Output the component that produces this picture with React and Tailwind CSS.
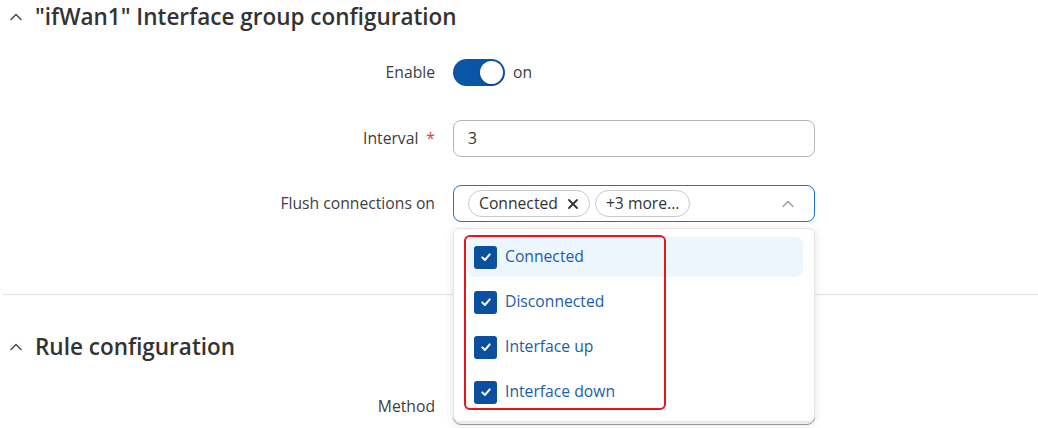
import React from 'react';

function ChevronUp({ className }) {
    return (
        <svg className={className} viewBox="0 0 16 16" fill="none" stroke="currentColor" strokeWidth="1.4" strokeLinecap="round" strokeLinejoin="round">
            <path d="M3 10.5 L8 5.5 L13 10.5" />
        </svg>
    );
}

function Check() {
    return (
        <svg className="w-[12px] h-[12px]" viewBox="0 0 16 16" fill="none" stroke="white" strokeWidth="2.6" strokeLinecap="round" strokeLinejoin="round">
            <path d="M3 8.5 L6.5 12 L13 4.5" />
        </svg>
    );
}

function FormRow({ label, required, children }) {
    return (
        <div className="flex items-center h-[37px]">
            <div className="w-[435px] text-right text-[15.7px] text-[#404040] shrink-0">
                {label}
                {required && <span className="text-[#e0413a] ml-[8px]">*</span>}
            </div>
            <div className="ml-[18px] flex items-center">{children}</div>
        </div>
    );
}

function Heading({ title }) {
    return (
        <div className="flex items-center h-[34px]">
            <ChevronUp className="w-[16px] h-[16px] ml-[8px] text-[#444]" />
            <h2 className="ml-[11px] text-[22.5px] font-semibold text-[#333] leading-none">{title}</h2>
        </div>
    );
}

const options = ['Connected', 'Disconnected', 'Interface up', 'Interface down'];

export default function App() {
    return (
        <div className="relative w-[1038px] h-[428px] overflow-hidden bg-white" style={{ fontFamily: '"Open Sans", sans-serif' }}>
            <Heading title={'"ifWan1" Interface group configuration'} />

            <div className="mt-[20px]">
                <FormRow label="Enable">
                    <div className="w-[52px] h-[27px] rounded-full bg-[#0a55a5] flex items-center justify-end pr-[2px]">
                        <div className="w-[23px] h-[23px] rounded-full bg-white shadow-[0_1px_2px_rgba(0,0,0,0.3)]"></div>
                    </div>
                    <span className="ml-[8px] text-[15.7px] text-[#404040]">on</span>
                </FormRow>
            </div>
            <div className="mt-[29px]">
                <FormRow label="Interval" required>
                    <div className="w-[362px] h-[37px] border border-[#b5b5b5] rounded-[8px] flex items-center px-[14px] text-[15.7px] text-[#333]">3</div>
                </FormRow>
            </div>
            <div className="mt-[28px]">
                <FormRow label="Flush connections on">
                    <div className="w-[362px] h-[37px] border border-[#1a73d9] rounded-[8px] flex items-center pl-[14px] pr-[18px]">
                        <div className="h-[27px] px-[10px] rounded-full border border-[#c8c8c8] flex items-center text-[15.7px] text-[#333]">
                            Connected
                            <svg className="w-[12px] h-[12px] ml-[9px]" viewBox="0 0 12 12" stroke="#333" strokeWidth="1.8" strokeLinecap="round">
                                <path d="M2 2 L10 10 M10 2 L2 10" />
                            </svg>
                        </div>
                        <div className="ml-[5px] h-[27px] px-[10px] rounded-full border border-[#c8c8c8] flex items-center text-[15.7px] text-[#333]">
                            +3 more...
                        </div>
                        <ChevronUp className="ml-auto w-[16px] h-[16px] text-[#9a9a9a]" />
                    </div>
                </FormRow>
            </div>

            <div className="mt-[72px] ml-[3px] border-t border-[#e3e3e3]"></div>

            <div className="mt-[35px]">
                <Heading title="Rule configuration" />
            </div>
            <div className="mt-[24px]">
                <FormRow label="Method">
                    <div className="w-[362px] h-[37px] border border-[#a0a0a8] rounded-[8px]"></div>
                </FormRow>
            </div>

            {/* dropdown */}
            <div className="absolute left-[453px] top-[228px] w-[362px] h-[194px] bg-white border border-[#e6e6e6] rounded-[6px] shadow-[0_2px_8px_rgba(0,0,0,0.12)] pt-[8px] pl-[13px] pr-[11px] z-10">
                {options.map((opt, i) => (
                    <div key={opt} className={'flex items-center h-[40px] mb-[5px] pl-[7px] rounded-[8px] ' + (i === 0 ? 'bg-[#eef6fd]' : '')}>
                        <div className="w-[23px] h-[23px] rounded-[3px] bg-[#0b4f9f] flex items-center justify-center">
                            <Check />
                        </div>
                        <span className="ml-[8px] text-[15.7px] text-[#1b5da6]">{opt}</span>
                    </div>
                ))}
                <div className="absolute left-[10px] top-[6px] w-[202px] h-[175px] border-2 border-[#e8141c] rounded-[6px]"></div>
            </div>
        </div>
    );
}
